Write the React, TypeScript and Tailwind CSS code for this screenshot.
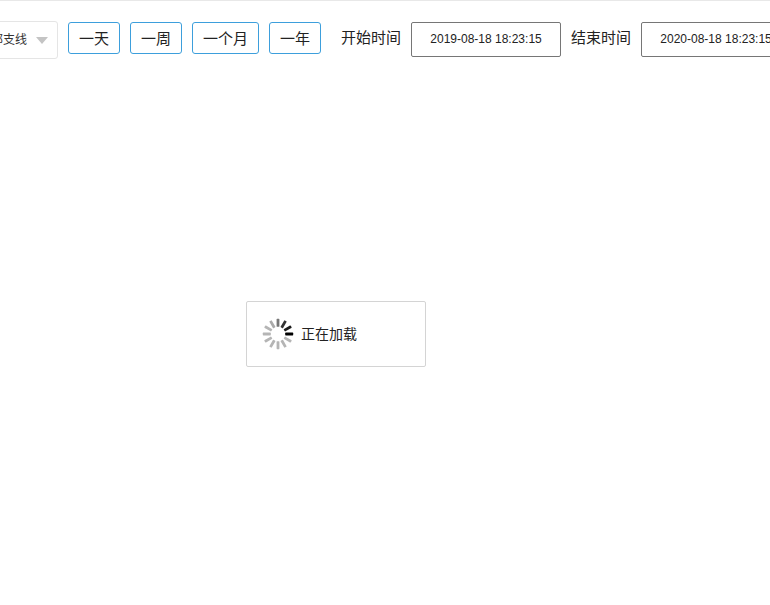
import React from "react";

function RangeButton({ label, w }: { label: string; w: string }) {
  return (
    <button className={`${w} h-8 shrink-0 rounded-[3px] border border-[#3d9fdc] bg-white text-[15px] leading-none text-[#222]`}>
      {label}
    </button>
  );
}

function DateField({ value }: { value: string }) {
  return (
    <div className="flex h-[35px] w-[150px] shrink-0 items-center justify-center rounded-[2px] border border-[#767676] bg-white pb-px text-xs text-[#222]">
      {value}
    </div>
  );
}

function Spinner() {
  const ticks = [
    { a: 90, c: "#000" },
    { a: 60, c: "#1a1a1a" },
    { a: 30, c: "#333" },
    { a: 0, c: "#777" },
    { a: -30, c: "#aaa" },
    { a: -60, c: "#b5b5b5" },
    { a: -90, c: "#b5b5b5" },
    { a: -120, c: "#b5b5b5" },
    { a: -150, c: "#b5b5b5" },
    { a: 180, c: "#b5b5b5" },
    { a: 150, c: "#b5b5b5" },
    { a: 120, c: "#b5b5b5" },
  ];
  return (
    <svg width="32" height="32" viewBox="0 0 32 32" className="shrink-0">
      {ticks.map((t, i) => (
        <rect
          key={i}
          x="14.6"
          y="0.8"
          width="2.8"
          height="8"
          rx="0.6"
          fill={t.c}
          transform={`rotate(${t.a} 16 16)`}
        />
      ))}
    </svg>
  );
}

export default function App() {
  return (
    <div className="relative h-[605px] w-[770px] overflow-hidden bg-white font-['Liberation_Sans','Noto_Sans_CJK_SC',sans-serif]">
      <div className="h-px bg-[#e8e8e8]" />
      <div className="ml-[-42px] flex items-start pt-5">
        <div className="flex h-[38px] w-[100px] shrink-0 items-center justify-end rounded-[3px] border border-[#e5e5e5] pr-[9px] text-xs text-[#333]">
          <span>全部支线</span>
          <span className="ml-[9px] h-0 w-0 border-x-[6px] border-t-[7px] border-x-transparent border-t-[#c4c4c4]" />
        </div>
        <div className="ml-[10px] mt-px flex gap-[10px]">
          <RangeButton label="一天" w="w-[52px]" />
          <RangeButton label="一周" w="w-[52px]" />
          <RangeButton label="一个月" w="w-[67px]" />
          <RangeButton label="一年" w="w-[52px]" />
        </div>
        <span className="ml-5 mt-px flex h-8 shrink-0 items-center text-[15px] text-[#222]">开始时间</span>
        <div className="ml-[10px] mt-px"><DateField value="2019-08-18 18:23:15" /></div>
        <span className="ml-[10px] mt-px flex h-8 shrink-0 items-center text-[15px] text-[#222]">结束时间</span>
        <div className="ml-[10px] mt-px"><DateField value="2020-08-18 18:23:15" /></div>
      </div>
      <div className="absolute left-[246px] top-[301px] flex h-[66px] w-[180px] items-center rounded-[2px] border border-[#d4d4d4] bg-white pl-[15px] text-sm text-[#222]">
        <Spinner />
        <span className="mb-px ml-[7px]">正在加载</span>
      </div>
    </div>
  );
}
